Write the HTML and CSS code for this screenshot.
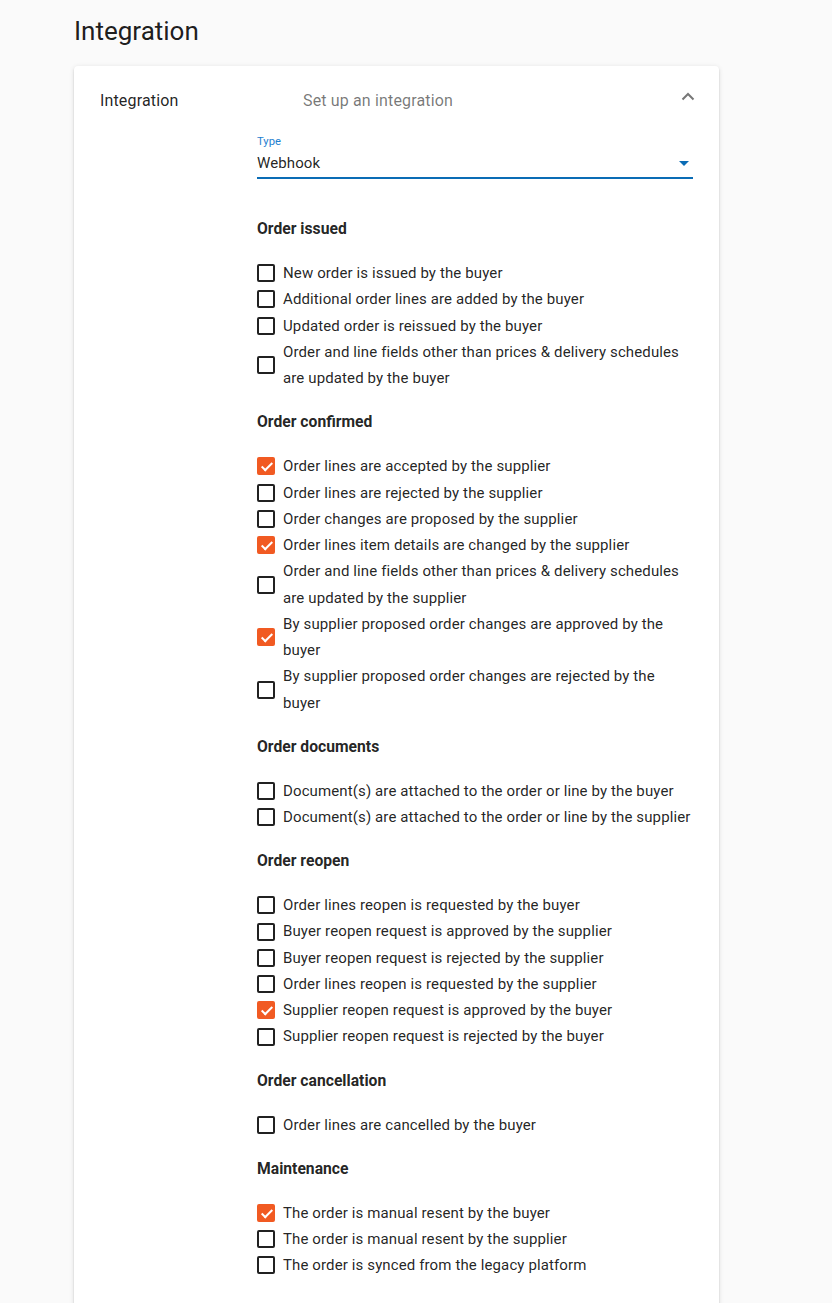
FILE: index.html
```html
<!DOCTYPE html>
<html lang="en">
<head>
<meta charset="utf-8">
<title>Integration</title>
<link rel="stylesheet" href="styles.css">
</head>
<body>
<main class="page">
  <h1 class="page-title">Integration</h1>
  <section class="panel">
    <header class="panel-header">
      <div class="panel-title">Integration</div>
      <div class="panel-desc">Set up an integration</div>
      <svg class="chevron" width="14" height="9" viewBox="0 0 14 9"><polyline points="1.5,7.5 7,2 12.5,7.5" fill="none" stroke="#777" stroke-width="2"/></svg>
    </header>
    <div class="panel-body">
      <div class="field">
        <div class="field-label">Type</div>
        <div class="field-control">
          <span class="field-value">Webhook</span>
          <span class="field-arrow"></span>
        </div>
      </div>

      <div class="group">
        <div class="group-title">Order issued</div>
        <label class="item"><span class="box"></span><span class="text">New order is issued by the buyer</span></label>
        <label class="item"><span class="box"></span><span class="text">Additional order lines are added by the buyer</span></label>
        <label class="item"><span class="box"></span><span class="text">Updated order is reissued by the buyer</span></label>
        <label class="item"><span class="box"></span><span class="text">Order and line fields other than prices &amp; delivery schedules are updated by the buyer</span></label>
      </div>

      <div class="group">
        <div class="group-title">Order confirmed</div>
        <label class="item"><span class="box checked"></span><span class="text">Order lines are accepted by the supplier</span></label>
        <label class="item"><span class="box"></span><span class="text">Order lines are rejected by the supplier</span></label>
        <label class="item"><span class="box"></span><span class="text">Order changes are proposed by the supplier</span></label>
        <label class="item"><span class="box checked"></span><span class="text">Order lines item details are changed by the supplier</span></label>
        <label class="item"><span class="box"></span><span class="text">Order and line fields other than prices &amp; delivery schedules are updated by the supplier</span></label>
        <label class="item"><span class="box checked"></span><span class="text">By supplier proposed order changes are approved by the buyer</span></label>
        <label class="item"><span class="box"></span><span class="text">By supplier proposed order changes are rejected by the buyer</span></label>
      </div>

      <div class="group">
        <div class="group-title">Order documents</div>
        <label class="item"><span class="box"></span><span class="text">Document(s) are attached to the order or line by the buyer</span></label>
        <label class="item"><span class="box"></span><span class="text">Document(s) are attached to the order or line by the supplier</span></label>
      </div>

      <div class="group">
        <div class="group-title">Order reopen</div>
        <label class="item"><span class="box"></span><span class="text">Order lines reopen is requested by the buyer</span></label>
        <label class="item"><span class="box"></span><span class="text">Buyer reopen request is approved by the supplier</span></label>
        <label class="item"><span class="box"></span><span class="text">Buyer reopen request is rejected by the supplier</span></label>
        <label class="item"><span class="box"></span><span class="text">Order lines reopen is requested by the supplier</span></label>
        <label class="item"><span class="box checked"></span><span class="text">Supplier reopen request is approved by the buyer</span></label>
        <label class="item"><span class="box"></span><span class="text">Supplier reopen request is rejected by the buyer</span></label>
      </div>

      <div class="group">
        <div class="group-title">Order cancellation</div>
        <label class="item"><span class="box"></span><span class="text">Order lines are cancelled by the buyer</span></label>
      </div>

      <div class="group">
        <div class="group-title">Maintenance</div>
        <label class="item"><span class="box checked"></span><span class="text">The order is manual resent by the buyer</span></label>
        <label class="item"><span class="box"></span><span class="text">The order is manual resent by the supplier</span></label>
        <label class="item"><span class="box"></span><span class="text">The order is synced from the legacy platform</span></label>
      </div>
    </div>
  </section>
</main>
</body>
</html>
```

FILE: styles.css
```css
html, body {
  margin: 0;
  padding: 0;
  background: #fafafa;
}
body {
  font-family: Roboto, "Liberation Sans", Arial, sans-serif;
  color: rgba(0, 0, 0, 0.87);
}
.page {
  width: 645px;
  margin-left: 74px;
  padding-top: 16px;
}
.page-title {
  margin: 0 0 20px 0;
  font-size: 26px;
  font-weight: 400;
  line-height: 30px;
  color: rgba(0, 0, 0, 0.9);
}
.panel {
  background: #fff;
  border-radius: 4px;
  box-shadow: 0 3px 1px -2px rgba(0,0,0,.2), 0 2px 2px 0 rgba(0,0,0,.14), 0 1px 5px 0 rgba(0,0,0,.12);
}
.panel-header {
  height: 69px;
  display: flex;
  align-items: center;
  padding: 0 24px 0 26px;
  font-size: 16px;
  letter-spacing: 0.15px;
}
.panel-title {
  width: 203px;
  flex: none;
}
.panel-desc {
  flex: 1;
  color: rgba(0, 0, 0, 0.54);
}
.chevron {
  display: block;
  margin-top: -9px;
}
.panel-body {
  padding: 0 26px 24px 183px;
}
.field-label {
  font-size: 11.25px;
  line-height: 14px;
  color: #1f7fd0;
}
.field-control {
  display: flex;
  align-items: center;
  justify-content: space-between;
  margin-top: 4px;
  padding-bottom: 4px;
  border-bottom: 2px solid #0a6cb5;
}
.field-value {
  font-size: 15px;
  line-height: 20px;
  letter-spacing: 0.12px;
}
.field-arrow {
  width: 0;
  height: 0;
  border-left: 5px solid transparent;
  border-right: 5px solid transparent;
  border-top: 5px solid #0a6cb5;
  margin-right: 4px;
}
.field {
  margin-bottom: 37px;
}
.group {
  margin-bottom: 17.85px;
  font-size: 15px;
  line-height: 26.25px;
  letter-spacing: 0.12px;
}
.group-title {
  font-size: 15.7px;
  font-weight: 700;
  letter-spacing: 0;
  margin-bottom: 17.85px;
}
.item {
  display: flex;
  align-items: center;
  gap: 8px;
}
.box {
  flex: none;
  width: 18px;
  height: 18px;
  box-sizing: border-box;
  border: 2px solid rgba(0, 0, 0, 0.87);
  border-radius: 2px;
  position: relative;
}
.box.checked {
  background: #f15a22;
  border-color: #f15a22;
}
.box.checked::after {
  content: "";
  position: absolute;
  left: 4.5px;
  top: 1px;
  width: 4px;
  height: 9px;
  border-right: 2px solid #fff;
  border-bottom: 2px solid #fff;
  transform: rotate(45deg);
}
.text {
  flex: 1;
}
```
